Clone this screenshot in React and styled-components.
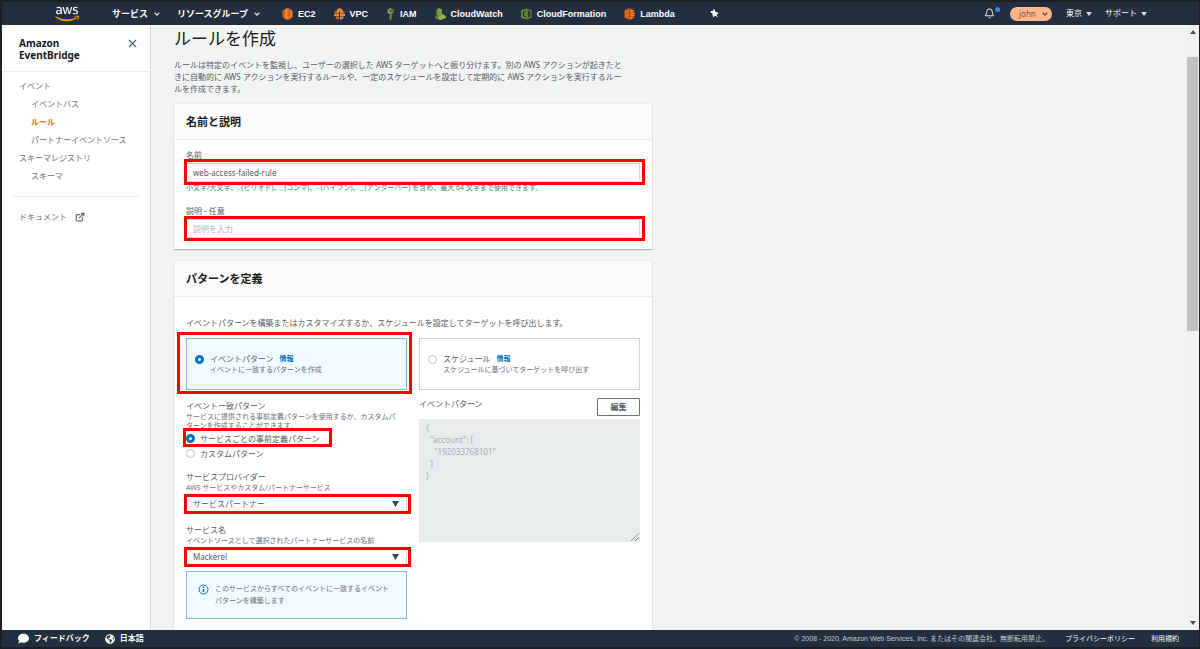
import React, { useState } from 'react';
import styled, { createGlobalStyle, css } from 'styled-components';
import { Bell, ExternalLink, X } from 'lucide-react';
import { FaAws, FaComment, FaGlobeAmericas } from 'react-icons/fa';

const GlobalStyle = createGlobalStyle`
  * {
    box-sizing: border-box;
  }

  body {
    margin: 0;
    font-family: 'Noto Sans', 'Noto Sans CJK JP', sans-serif;
    font-size: 8px;
    line-height: 12px;
    color: #545b64;
  }

  button, input, select, textarea {
    font-family: inherit;
    font-size: inherit;
    line-height: inherit;
    color: inherit;
  }
`;

const Page = styled.div`
  display: flex;
  flex-direction: column;
  height: 100vh;
  border: 2px solid #1b2027;
  border-right-width: 1px;
  overflow: hidden;
`;

const TopBar = styled.header`
  display: flex;
  align-items: center;
  flex: none;
  height: 23px;
  padding: 0 52px 0 53px;
  background-color: #232f3e;
  color: #fff;
  font-family: 'Liberation Sans', 'Noto Sans CJK JP', sans-serif;
  font-size: 9px;
  font-weight: bold;
`;

const Logo = styled.a`
  display: flex;
  width: 24px;
  margin-right: 33px;

  svg {
    width: 24px;
    height: 20px;
  }

  path {
    fill: url(#logoFill);
  }
`;

const MenuButton = styled.button`
  display: flex;
  align-items: center;
  gap: ${props => (props.$light ? 4 : 6)}px;
  margin-right: ${props => props.$after || 0}px;
  padding: 0;
  border: none;
  background: none;
  font-weight: ${props => (props.$light ? 'normal' : 'bold')};
  font-size: ${props => (props.$light ? 8 : 9)}px;
  white-space: nowrap;
  cursor: pointer;
`;

const Shortcuts = styled.nav`
  display: flex;
  align-items: center;
  gap: 18px;
  flex: 1;
`;

const Shortcut = styled.a`
  display: flex;
  align-items: center;
  gap: 5px;
  color: #fff;
  text-decoration: none;
`;

const PinButton = styled.button`
  display: flex;
  margin-left: 17px;
  padding: 0;
  border: none;
  background: none;
`;

const BellButton = styled.button`
  position: relative;
  display: flex;
  margin-right: 15px;
  padding: 0;
  border: none;
  background: none;

  &::after {
    content: '';
    position: absolute;
    top: -1px;
    right: -5px;
    width: 5px;
    height: 5px;
    border-radius: 50%;
    background-color: #2e8bef;
  }
`;

const UserPill = styled.button`
  display: flex;
  align-items: center;
  justify-content: space-between;
  width: 42px;
  height: 14px;
  margin-right: 14px;
  padding: 0 4px 0 9px;
  border: none;
  border-radius: 7px;
  background-color: #ffb78a;
  color: #6b5344;
  font-family: 'Noto Sans', sans-serif;
  font-size: 8px;
`;

const Body = styled.div`
  display: flex;
  flex: 1;
  min-height: 0;
  background-color: #f2f3f3;
`;

const Sidebar = styled.aside`
  flex: none;
  width: 149px;
  background-color: #fff;
  border-right: 1px solid #d9dddd;
`;

const SidebarHeader = styled.div`
  display: flex;
  justify-content: space-between;
  align-items: flex-start;
  height: 47px;
  padding: 12px 11px 0 17px;
  border-bottom: 1px solid #eaeded;
`;

const SidebarTitle = styled.h2`
  width: 80px;
  margin: 0;
  color: #16191f;
  font-size: 10px;
  line-height: 12px;
`;

const CloseButton = styled.button`
  display: flex;
  padding: 0;
  border: none;
  background: none;
  color: #545b64;
`;

const SideNav = styled.nav`
  display: flex;
  flex-direction: column;
  margin: 0 10px 0 11px;
  padding: 5px 0 11px 6px;
  border-bottom: 1px solid #eaeded;
`;

const SideLink = styled.a`
  padding-left: ${props => (props.$nested ? 12 : 0)}px;
  color: ${props => (props.$active ? '#ec7211' : '#687078')};
  font-weight: ${props => (props.$active ? 'bold' : 'normal')};
  line-height: 18px;
  text-decoration: none;
`;

const DocLink = styled.a`
  display: flex;
  align-items: center;
  gap: 8px;
  padding: 14px 17px;
  color: #687078;
  text-decoration: none;
`;

const Content = styled.main`
  flex: 1;
  min-width: 0;
  padding: 3px 23px 0;
  overflow: hidden;
`;

const Form = styled.form`
  display: flex;
  flex-direction: column;
  gap: 12px;
  max-width: 478px;
`;

const PageTitle = styled.h1`
  margin: 0 0 9px;
  color: #16191f;
  font-size: 17px;
  font-weight: normal;
  line-height: 22px;
`;

const Lead = styled.p`
  margin: 0 0 9px;
  white-space: nowrap;
`;

const Card = styled.section`
  background-color: #fff;
  box-shadow: 0 1px 1px #aab7b8, 0 0 1px #c5cccc;
`;

const CardHeader = styled.div`
  padding: 10px 12px;
  background-color: #fafafa;
  border-bottom: 1px solid #eaeded;
`;

const CardTitle = styled.h2`
  margin: 0;
  color: #16191f;
  font-size: 11px;
  line-height: 15px;
`;

const CardBody = styled.div`
  padding: ${props => (props.$roomy ? '20px 12px 24px' : '9px 12px 11px')};
`;

const Field = styled.div`
  display: flex;
  flex-direction: column;
  margin-top: ${props => props.$space || 0}px;
`;

const Label = styled.label`
  display: block;
`;

const Hint = styled.p`
  margin: 0;
  color: #687078;
  font-size: 7px;
  line-height: ${props => (props.$tall ? 12 : 9)}px;
`;

// red frame drawn over a control, $inset is the distance to its edges
const Marked = styled.div`
  position: relative;
  width: ${props => (props.$fit ? 'fit-content' : 'auto')};
  margin-top: ${props => props.$space || 0}px;

  &::after {
    content: '';
    position: absolute;
    inset: ${props => props.$inset};
    border: 3px solid #fe0000;
    pointer-events: none;
  }
`;

const controlBox = css`
  display: block;
  width: 100%;
  padding: 0 6px;
  border: 1px solid #d5dbdb;
  border-radius: 1px;
  background-color: #fff;
`;

const TextInput = styled.input`
  ${controlBox}
  height: 19px;

  &::placeholder {
    color: #aab7b8;
  }
`;

const Select = styled.select`
  ${controlBox}
  height: 18px;
  appearance: none;
`;

const SelectArrow = styled.svg`
  position: absolute;
  top: 6px;
  right: 8px;
  width: 7px;
  height: 6px;
  pointer-events: none;
`;

const Columns = styled.div`
  display: grid;
  grid-template-columns: 1fr 1fr;
  gap: 12px;
  margin-top: ${props => props.$space}px;
`;

const Tile = styled.label`
  display: flex;
  gap: 6px;
  height: 52px;
  padding: 14px 8px;
  border: 1px solid ${props => (props.$selected ? '#6ec6de' : '#d0d7d7')};
  background-color: ${props => (props.$selected ? '#f1faff' : '#fff')};
`;

const TileTitle = styled.span`
  display: flex;
  gap: 6px;
`;

const InfoLink = styled.a`
  color: #0073bb;
  font-size: 7px;
  font-weight: bold;
  text-decoration: none;
`;

const Radio = styled.input`
  flex: none;
  width: 9px;
  height: 9px;
  margin: ${props => (props.$tile ? '2px 0 0' : '0')};
  border: 1px solid #b8c3c4;
  border-radius: 50%;
  background-color: #fff;
  appearance: none;

  &:checked {
    border: 3px solid #0073bb;
  }
`;

const RadioRow = styled.label`
  display: flex;
  align-items: center;
  gap: 5px;
  height: 15px;
`;

const PatternHeader = styled.div`
  display: flex;
  justify-content: space-between;
  height: 21px;
`;

const EditButton = styled.button`
  width: 43px;
  height: 18px;
  padding: 0;
  border: 1px solid #687078;
  border-radius: 1px;
  background-color: #fff;
  font-weight: bold;
`;

const PatternWrap = styled.div`
  position: relative;
`;

const PatternBox = styled.textarea`
  display: block;
  width: 100%;
  height: 123px;
  padding: 3px 7px;
  border: none;
  background-color: #e9ecec;
  color: #a3aeaf;
  resize: none;
`;

const Grip = styled.svg`
  position: absolute;
  right: 1px;
  bottom: 1px;
  width: 8px;
  height: 8px;
`;

const Alert = styled.div`
  display: flex;
  gap: 6px;
  margin-top: 5px;
  padding: 11px;
  border: 1px solid #7fbfdf;
  background-color: #f1faff;
  color: #687078;
  font-size: 7px;

  svg {
    flex: none;
    margin-top: 1px;
  }
`;

const ScrollTrack = styled.div`
  display: flex;
  flex-direction: column;
  align-items: center;
  flex: none;
  width: 13px;
  padding: 5px 0;
  background-color: #f1f1f1;
`;

const ScrollThumb = styled.div`
  width: 11px;
  height: 46%;
  margin-top: 23px;
  margin-bottom: auto;
  background-color: #c1c1c1;
`;

const BottomBar = styled.footer`
  display: flex;
  align-items: center;
  flex: none;
  height: 17px;
  padding: 0 20px 0 16px;
  background-color: #232f3e;
  color: #fff;
  font-family: 'Liberation Sans', 'Noto Sans CJK JP', sans-serif;
`;

const FooterLink = styled.a`
  display: flex;
  align-items: center;
  gap: 5px;
  margin-right: 15px;
  color: #fff;
  font-size: 8px;
  font-weight: bold;
  text-decoration: none;
`;

const Legal = styled.div`
  display: flex;
  gap: 16px;
  margin-left: auto;
  color: #c3c8ce;
  font-size: 7px;

  a {
    color: #fff;
    text-decoration: none;
  }
`;

const Chevron = ({ color = '#d5dbdb' }) => (
  <svg width="6" height="4" viewBox="0 0 6 4" fill="none" stroke={color} strokeWidth="1.3">
    <path d="M.7 .8 3 3 5.3 .8" />
  </svg>
);

const Caret = ({ color = '#d5dbdb', up }) => (
  <svg width="6" height="4" viewBox="0 0 6 4">
    <path fill={color} d={up ? 'M0 4h6L3 0z' : 'M0 0h6L3 4z'} />
  </svg>
);

const Ec2Icon = () => (
  <svg width="11" height="12" viewBox="0 0 22 24">
    <path fill="#f58534" d="M5 3 11 0l6 3v18l-6 3-6-3z" />
    <path fill="#d86613" d="M1 6l4-3v18l-4-3zM11 0l6 3v18l-6 3z" />
    <path fill="#f58534" d="M17 3l4 3v12l-4 3z" />
  </svg>
);

const VpcIcon = () => (
  <svg width="11" height="12" viewBox="0 0 22 24">
    <path fill="#d86613" d="M1 7l5-2v6H1zM3 17h7v7l-7-4zM16 5l5 2v4h-5z" />
    <path fill="#f58534" d="M6 3l5-3 6 3v8h-5V7h-2v4H6zM0 12h10v4H0zM12 12h10v4H12zM12 17h7v3l-7 4z" />
  </svg>
);

const IamIcon = () => (
  <svg width="9" height="12" viewBox="0 0 18 24">
    <path fill="#759c3e" fillRule="evenodd" d="M3 3 9 0l6 3v7l-4 3v9l-3 2-2-2 2-2-2-2 2-2v-3l-5-3zM8 4v3h3V4z" />
    <path fill="#5a7a33" d="M12 2l3 1v7l-4 3v9l-2 2V12l3-2z" />
  </svg>
);

const CloudWatchIcon = () => (
  <svg width="11" height="12" viewBox="0 0 22 24">
    <path fill="#759c3e" d="M3 3l6-3 5 3v11l-5 3-6-3z" />
    <path fill="#5a7a33" d="M0 17l4-3 6 3v4l-4 2-6-3z" />
    <path fill="#8cb750" d="M6 18l10-6 6 5v3l-11 4-5-2z" />
  </svg>
);

const CloudFormationIcon = () => (
  <svg width="11" height="12" viewBox="0 0 22 24" fill="none" strokeWidth="3">
    <path stroke="#759c3e" d="M9 3 2 6v12l7 3M8 8v8" />
    <path stroke="#5c7c31" d="M13 3l7 3v12l-7 3zM11 1v22" />
  </svg>
);

const LambdaIcon = () => (
  <svg width="11" height="12" viewBox="0 0 22 24">
    <path fill="#d86613" d="M11 0 1 5v14l10 5z" />
    <path fill="#c0560f" d="M11 0l10 5v14l-10 5z" />
    <path fill="#f58534" d="M13 3l5 2v3h-5zM13 10h8v2h-8zM13 14h8v2h-8zM13 18h5v2l-5 2z" />
  </svg>
);

const PinIcon = () => (
  <svg width="9" height="9" viewBox="0 0 18 18">
    <path fill="#fff" d="M7 0l3 2v3l5 2 2 2-4 2 3 6-6-4-3 4-2-5V9L1 7l1-3h4z" />
  </svg>
);

const InfoIcon = () => (
  <svg width="11" height="11" viewBox="0 0 22 22" fill="none" stroke="#0073bb" strokeWidth="2">
    <circle cx="11" cy="11" r="9" />
    <path strokeWidth="3" d="M11 10v6M11 5v3" />
  </svg>
);

const shortcuts = [
  { name: 'EC2', Icon: Ec2Icon },
  { name: 'VPC', Icon: VpcIcon },
  { name: 'IAM', Icon: IamIcon },
  { name: 'CloudWatch', Icon: CloudWatchIcon },
  { name: 'CloudFormation', Icon: CloudFormationIcon },
  { name: 'Lambda', Icon: LambdaIcon },
];

const sideLinks = [
  { text: 'イベント' },
  { text: 'イベントバス', nested: true },
  { text: 'ルール', nested: true, active: true },
  { text: 'パートナーイベントソース', nested: true },
  { text: 'スキーマレジストリ' },
  { text: 'スキーマ', nested: true },
];

const pattern = `{
  "account": [
    "192033768101"
  ]
}`;

function SelectField({ id, label, hint, option, space }) {
  return (
    <Field $space={space}>
      <Label htmlFor={id}>{label}</Label>
      <Hint>{hint}</Hint>
      <Marked $space={3} $inset="-1px -4px -1px -2px">
        <Select id={id}>
          <option>{option}</option>
        </Select>
        <SelectArrow viewBox="0 0 7 6">
          <path fill="#3f464e" d="M0 0h7L3.500 6z" />
        </SelectArrow>
      </Marked>
    </Field>
  );
}

function App() {
  const [name, setName] = useState('web-access-failed-rule');
  const [description, setDescription] = useState('');
  const [trigger, setTrigger] = useState('event');
  const [match, setMatch] = useState('service');

  return (
    <Page>
      <GlobalStyle />
      <TopBar>
        <svg width="0" height="0">
          <linearGradient id="logoFill" x1="0" y1="0" x2="0" y2="1">
            <stop offset="0.62" stopColor="#fff" />
            <stop offset="0.62" stopColor="#ff9900" />
          </linearGradient>
        </svg>
        <Logo href="#" aria-label="AWS"><FaAws /></Logo>
        <MenuButton $after={17}>サービス <Chevron /></MenuButton>
        <MenuButton $after={22}>リソースグループ <Chevron /></MenuButton>
        <Shortcuts>
          {shortcuts.map(({ name, Icon }) => (
            <Shortcut key={name} href="#"><Icon />{name}</Shortcut>
          ))}
          <PinButton aria-label="Pin"><PinIcon /></PinButton>
        </Shortcuts>
        <BellButton aria-label="Notifications"><Bell size={11} color="#fff" /></BellButton>
        <UserPill>john <Chevron color="#6b4a35" /></UserPill>
        <MenuButton $light $after={13}>東京 <Caret /></MenuButton>
        <MenuButton $light>サポート <Caret /></MenuButton>
      </TopBar>

      <Body>
        <Sidebar>
          <SidebarHeader>
            <SidebarTitle>Amazon EventBridge</SidebarTitle>
            <CloseButton aria-label="Close"><X size={13} /></CloseButton>
          </SidebarHeader>
          <SideNav>
            {sideLinks.map(link => (
              <SideLink key={link.text} href="#" $nested={link.nested} $active={link.active}>
                {link.text}
              </SideLink>
            ))}
          </SideNav>
          <DocLink href="#">ドキュメント <ExternalLink size={10} strokeWidth={3} /></DocLink>
        </Sidebar>

        <Content>
          <PageTitle>ルールを作成</PageTitle>
          <Lead>
            ルールは特定のイベントを監視し、ユーザーの選択した AWS ターゲットへと振り分けます。別の AWS アクションが起きたと<br />
            きに自動的に AWS アクションを実行するルールや、一定のスケジュールを設定して定期的に AWS アクションを実行するルー<br />
            ルを作成できます。
          </Lead>
          <Form onSubmit={e => e.preventDefault()}>
            <Card>
              <CardHeader>
                <CardTitle>名前と説明</CardTitle>
              </CardHeader>
              <CardBody>
                <Field>
                  <Label htmlFor="name">名前</Label>
                  <Marked $space={2} $inset="-4px -5px -3px -2px">
                    <TextInput id="name" value={name} onChange={e => setName(e.target.value)} />
                  </Marked>
                  <Hint $tall>小文字/大文字、. (ピリオド)、, (コンマ)、- (ハイフン)、_ (アンダーバー) を含め、最大 64 文字まで使用できます。</Hint>
                </Field>
                <Field $space={11}>
                  <Label htmlFor="description">説明 - 任意</Label>
                  <Marked $space={2} $inset="-3px -5px -3px -2px">
                    <TextInput
                      id="description"
                      placeholder="説明を入力"
                      value={description}
                      onChange={e => setDescription(e.target.value)}
                    />
                  </Marked>
                </Field>
              </CardBody>
            </Card>

            <Card>
              <CardHeader>
                <CardTitle>パターンを定義</CardTitle>
              </CardHeader>
              <CardBody $roomy>
                <div>イベントパターンを構築またはカスタマイズするか、スケジュールを設定してターゲットを呼び出します。</div>
                <Columns $space={9}>
                  <Marked $inset="-6px -5px -4px -9px">
                    <Tile $selected={trigger === 'event'}>
                      <Radio $tile type="radio" name="trigger" checked={trigger === 'event'} onChange={() => setTrigger('event')} />
                      <div>
                        <TileTitle>イベントパターン <InfoLink href="#">情報</InfoLink></TileTitle>
                        <Hint>イベントに一致するパターンを作成</Hint>
                      </div>
                    </Tile>
                  </Marked>
                  <Tile $selected={trigger === 'schedule'}>
                    <Radio $tile type="radio" name="trigger" checked={trigger === 'schedule'} onChange={() => setTrigger('schedule')} />
                    <div>
                      <TileTitle>スケジュール <InfoLink href="#">情報</InfoLink></TileTitle>
                      <Hint>スケジュールに基づいてターゲットを呼び出す</Hint>
                    </div>
                  </Tile>
                </Columns>

                <Columns $space={8}>
                  <div>
                    <Field $space={2}>
                      <div>イベント一致パターン</div>
                      <Hint>
                        サービスに提供される事前定義パターンを使用するか、カスタムパ<br />
                        ターンを作成することができます。
                      </Hint>
                      <Marked $fit $space={1} $inset="-3px -12px -1px -3px">
                        <RadioRow>
                          <Radio type="radio" name="match" checked={match === 'service'} onChange={() => setMatch('service')} />
                          サービスごとの事前定義パターン
                        </RadioRow>
                      </Marked>
                      <RadioRow>
                        <Radio type="radio" name="match" checked={match === 'custom'} onChange={() => setMatch('custom')} />
                        カスタムパターン
                      </RadioRow>
                    </Field>
                    <SelectField
                      id="provider"
                      label="サービスプロバイダー"
                      hint="AWS サービスやカスタム/パートナーサービス"
                      option="サービスパートナー"
                      space={10}
                    />
                    <SelectField
                      id="service"
                      label="サービス名"
                      hint="イベントソースとして選択されたパートナーサービスの名前"
                      option="Mackerel"
                      space={11}
                    />
                    <Alert>
                      <InfoIcon />
                      <div>
                        このサービスからすべてのイベントに一致するイベント<br />
                        パターンを構築します
                      </div>
                    </Alert>
                  </div>
                  <div>
                    <PatternHeader>
                      <Label htmlFor="pattern">イベントパターン</Label>
                      <EditButton type="button">編集</EditButton>
                    </PatternHeader>
                    <PatternWrap>
                      <PatternBox id="pattern" readOnly value={pattern} />
                      <Grip viewBox="0 0 8 8" fill="none" stroke="#8d9698">
                        <path d="M0 8 8 0M4 8l4-4" />
                      </Grip>
                    </PatternWrap>
                  </div>
                </Columns>
              </CardBody>
            </Card>
          </Form>
        </Content>

        <ScrollTrack>
          <Caret up color="#505050" />
          <ScrollThumb />
          <Caret color="#505050" />
        </ScrollTrack>
      </Body>

      <BottomBar>
        <FooterLink href="#"><FaComment size={11} />フィードバック</FooterLink>
        <FooterLink href="#"><FaGlobeAmericas size={10} />日本語</FooterLink>
        <Legal>
          <span>© 2008 - 2020, Amazon Web Services, Inc. またはその関連会社。無断転用禁止。</span>
          <a href="#">プライバシーポリシー</a>
          <a href="#">利用規約</a>
        </Legal>
      </BottomBar>
    </Page>
  );
}

export default App;
